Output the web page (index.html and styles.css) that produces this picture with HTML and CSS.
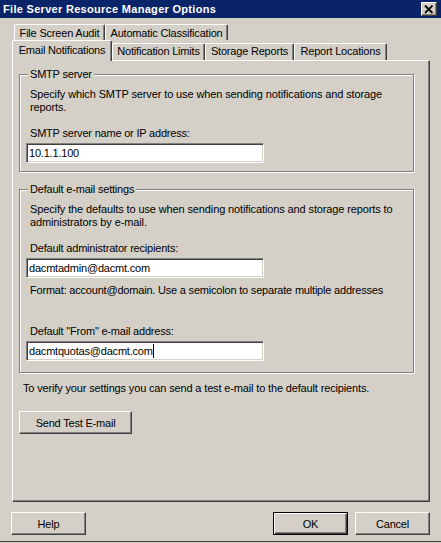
FILE: index.html
```html
<!DOCTYPE html>
<html lang="en">
<head>
    <meta charset="UTF-8">
    <title>File Server Resource Manager Options</title>
    <link rel="stylesheet" href="styles.css">
</head>
<body>
<div class="window">
    <div class="titlebar">
        <span class="title">File Server Resource Manager Options</span>
        <button class="close"><svg width="10" height="9" viewBox="0 0 10 9"><path d="M1 0.5 L8.5 8 M8.5 0.5 L1 8" stroke="#000" stroke-width="1.8" fill="none"/></svg></button>
    </div>
    <div class="tabs">
        <div class="tab-row back">
            <div class="tab w-audit">File Screen Audit</div>
            <div class="tab w-class">Automatic Classification</div>
        </div>
        <div class="tab-row front">
            <div class="tab selected w-email">Email Notifications</div>
            <div class="tab w-limits">Notification Limits</div>
            <div class="tab w-storage">Storage Reports</div>
            <div class="tab w-locations">Report Locations</div>
        </div>
    </div>
    <div class="panel">
        <div class="group smtp">
            <div class="group-title">SMTP server</div>
            <p class="desc">Specify which SMTP server to use when sending notifications and storage<br>reports.</p>
            <label class="field-label">SMTP server name or IP address:</label>
            <div class="textbox">10.1.1.100</div>
        </div>
        <div class="group defaults">
            <div class="group-title">Default e-mail settings</div>
            <p class="desc">Specify the defaults to use when sending notifications and storage reports to<br>administrators by e-mail.</p>
            <label class="field-label">Default administrator recipients:</label>
            <div class="textbox">dacmtadmin@dacmt.com</div>
            <p class="format">Format: account@domain. Use a semicolon to separate multiple addresses</p>
            <label class="field-label from-label">Default "From" e-mail address:</label>
            <div class="textbox">dacmtquotas@dacmt.com<span class="caret"></span></div>
        </div>
        <p class="verify">To verify your settings you can send a test e-mail to the default recipients.</p>
        <button class="btn send">Send Test E-mail</button>
    </div>
    <div class="footer">
        <button class="btn help">Help</button>
        <button class="btn ok default">OK</button>
        <button class="btn cancel">Cancel</button>
    </div>
</div>
</body>
</html>
```

FILE: styles.css
```css
body { margin: 0; background: #d4d0c8; font: 11px "Liberation Sans", Arial, sans-serif; color: #000; }
p { margin: 0; }
.window { width: 441px; height: 541px; border-bottom: 1px solid #404040; }

.titlebar { height: 18px; background: #0a246a; color: #fff; display: flex; align-items: center; padding-left: 3px; }
.title { font-weight: bold; letter-spacing: 0.3px; }
.close { margin-left: auto; margin-right: 4px; width: 16px; height: 14px; padding: 0; display: flex; align-items: center; justify-content: center; background: #d4d0c8; border: 1px solid; border-color: #fff #404040 #404040 #fff; box-shadow: inset -1px -1px #808080; }

.tabs { padding-top: 6px; }
.tab-row { display: flex; }
.tab-row.back { margin-left: 14px; height: 16px; }
.tab-row.front { margin-left: 12px; height: 21px; align-items: flex-end; margin-bottom: -1px; position: relative; z-index: 1; }
.tab { box-sizing: border-box; text-align: center; line-height: 13px; letter-spacing: -0.2px; white-space: nowrap; background: #d4d0c8; border: 1px solid #fff; border-right-color: #404040; border-bottom: none; box-shadow: inset -1px 0 #808080; border-radius: 2px 2px 0 0; }
.back .tab { height: 16px; padding-top: 2px; }
.front .tab { height: 17px; margin-bottom: 1px; padding-top: 1px; }
.front .tab.selected { height: 21px; margin-bottom: 0; padding-top: 3px; }
.w-audit { width: 91px; }
.w-class { width: 123px; }
.w-email { width: 100px; }
.w-limits { width: 93px; }
.w-storage { width: 89px; }
.w-locations { width: 93px; }

.panel { margin-left: 12px; width: 418px; height: 442px; box-sizing: border-box; border: 1px solid; border-color: #fff #404040 #404040 #fff; box-shadow: inset -1px -1px #808080; padding: 13px 0 0 6px; }
.group { width: 395px; box-sizing: border-box; border: 1px solid #808080; box-shadow: inset 1px 1px #fff, 1px 1px #fff; padding: 0 10px 8px; letter-spacing: -0.2px; }
.group.defaults { margin-top: 17px; padding-bottom: 11px; }
.group-title { display: table; margin: -7px 0 0 -2px; padding: 0 2px; line-height: 13px; background: #d4d0c8; }
.desc { margin-top: 7px; line-height: 13px; letter-spacing: -0.12px; }
.field-label { display: block; margin-top: 13px; line-height: 13px; }
.from-label { margin-top: 28px; }
.format { margin-top: 6px; line-height: 13px; }
.textbox { margin: 3px 0 0 -4px; width: 238px; height: 20px; box-sizing: border-box; border: 1px solid; border-color: #808080 #fff #fff #808080; box-shadow: inset 1px 1px #404040, inset -1px -1px #d4d0c8; background: #fff; padding: 0 2px; line-height: 18px; }
.caret { display: inline-block; width: 1px; height: 14px; background: #000; vertical-align: -3px; }
.verify { margin: 9px 0 0 4px; line-height: 13px; letter-spacing: -0.15px; }

.btn { box-sizing: border-box; height: 23px; padding: 0; font: inherit; letter-spacing: -0.2px; color: #000; background: #d4d0c8; border: 1px solid; border-color: #fff #404040 #404040 #fff; box-shadow: inset -1px -1px #808080; }
.btn.default { border-color: #000; box-shadow: inset 1px 1px #fff, inset -1px -1px #404040, inset -2px -2px #808080; }
.send { display: block; margin-top: 16px; width: 113px; }
.footer { display: flex; padding: 10px 11px 0; }
.help, .ok, .cancel { width: 75px; }
.ok { margin-left: auto; margin-right: 7px; }
```
